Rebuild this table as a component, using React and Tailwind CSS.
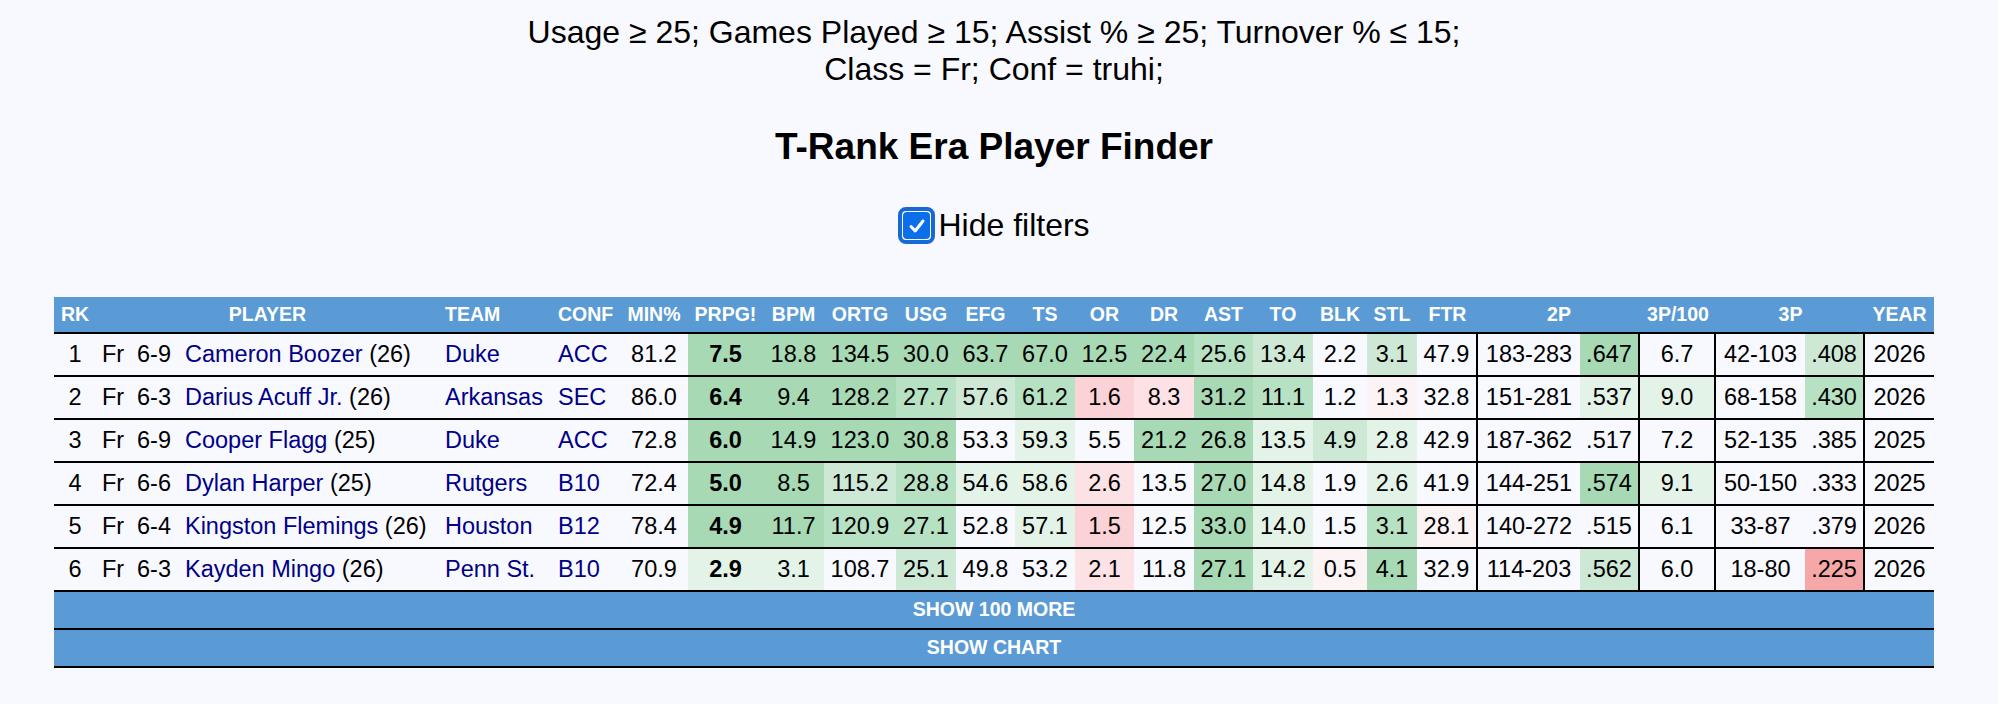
import React from "react";

// cell shades
const G4 = "bg-[#a7d9b4]";
const G3 = "bg-[#b7e1c3]";
const G2 = "bg-[#cde9d6]";
const G1 = "bg-[#e3f3e8]";
const R0 = "bg-[#fcf3f5]";
const R1 = "bg-[#fde2e5]";
const R2 = "bg-[#fbd2d6]";
const R3 = "bg-[#f6a7a7]";
const N = "";

const players = [
  {
    rk: 1, cls: "Fr", ht: "6-9", name: "Cameron Boozer", n: 26, team: "Duke", conf: "ACC", min: "81.2",
    stats: [["7.5", G4], ["18.8", G4], ["134.5", G4], ["30.0", G4], ["63.7", G4], ["67.0", G4], ["12.5", G4], ["22.4", G4], ["25.6", G3], ["13.4", G2], ["2.2", N], ["3.1", G2], ["47.9", N], ["183-283", N], [".647", G4], ["6.7", N], ["42-103", N], [".408", G2], ["2026", N]],
  },
  {
    rk: 2, cls: "Fr", ht: "6-3", name: "Darius Acuff Jr.", n: 26, team: "Arkansas", conf: "SEC", min: "86.0",
    stats: [["6.4", G4], ["9.4", G4], ["128.2", G4], ["27.7", G3], ["57.6", G2], ["61.2", G3], ["1.6", R2], ["8.3", R1], ["31.2", G4], ["11.1", G3], ["1.2", N], ["1.3", R0], ["32.8", N], ["151-281", N], [".537", G1], ["9.0", G1], ["68-158", N], [".430", G3], ["2026", N]],
  },
  {
    rk: 3, cls: "Fr", ht: "6-9", name: "Cooper Flagg", n: 25, team: "Duke", conf: "ACC", min: "72.8",
    stats: [["6.0", G4], ["14.9", G4], ["123.0", G4], ["30.8", G4], ["53.3", N], ["59.3", G1], ["5.5", N], ["21.2", G4], ["26.8", G4], ["13.5", G1], ["4.9", G2], ["2.8", G1], ["42.9", N], ["187-362", N], [".517", N], ["7.2", N], ["52-135", N], [".385", N], ["2025", N]],
  },
  {
    rk: 4, cls: "Fr", ht: "6-6", name: "Dylan Harper", n: 25, team: "Rutgers", conf: "B10", min: "72.4",
    stats: [["5.0", G4], ["8.5", G4], ["115.2", G2], ["28.8", G3], ["54.6", G1], ["58.6", G1], ["2.6", R1], ["13.5", N], ["27.0", G4], ["14.8", G1], ["1.9", N], ["2.6", G1], ["41.9", N], ["144-251", N], [".574", G4], ["9.1", G1], ["50-150", N], [".333", N], ["2025", N]],
  },
  {
    rk: 5, cls: "Fr", ht: "6-4", name: "Kingston Flemings", n: 26, team: "Houston", conf: "B12", min: "78.4",
    stats: [["4.9", G4], ["11.7", G4], ["120.9", G3], ["27.1", G3], ["52.8", N], ["57.1", G1], ["1.5", R2], ["12.5", N], ["33.0", G4], ["14.0", G1], ["1.5", N], ["3.1", G3], ["28.1", R0], ["140-272", N], [".515", N], ["6.1", N], ["33-87", N], [".379", N], ["2026", N]],
  },
  {
    rk: 6, cls: "Fr", ht: "6-3", name: "Kayden Mingo", n: 26, team: "Penn St.", conf: "B10", min: "70.9",
    stats: [["2.9", G1], ["3.1", G1], ["108.7", N], ["25.1", G2], ["49.8", N], ["53.2", N], ["2.1", R1], ["11.8", N], ["27.1", G4], ["14.2", G1], ["0.5", R0], ["4.1", G4], ["32.9", N], ["114-203", N], [".562", G2], ["6.0", N], ["18-80", N], [".225", R3], ["2026", N]],
  },
];

// stat index -> draws the black divider on its right
const dividers = [12, 14, 15, 17];

const Checkbox = () => (
  <span className="flex h-[37px] w-[37px] items-center justify-center rounded-[8px] border-[4px] border-[#1769d6] bg-white p-[1px]">
    <span className="flex h-full w-full items-center justify-center rounded-[4px] bg-[#0a6fe8]">
      <svg width="20" height="20" viewBox="0 0 20 20">
        <path d="M4 10.5 L8.2 15 L16 5" fill="none" stroke="white" strokeWidth="3" strokeLinecap="round" strokeLinejoin="round" />
      </svg>
    </span>
  </span>
);

export default function App() {
  const td = "h-[43px] border-b-2 border-black text-center whitespace-nowrap";

  return (
    <div className="h-[704px] overflow-hidden bg-[#f8f9fe] pr-[10px] font-['Liberation_Sans',Arial,sans-serif] text-black">
      <div className="pt-[14px] text-center text-[32px] leading-[37px]">
        Usage ≥ 25; Games Played ≥ 15; Assist % ≥ 25; Turnover % ≤ 15;
        <br />
        Class = Fr; Conf = truhi;
      </div>

      <h1 className="mt-[37px] text-center text-[37px] font-bold leading-[43px]">T-Rank Era Player Finder</h1>

      <div className="mt-[39px] flex items-center justify-center">
        <Checkbox />
        <span className="ml-[3px] text-[32px] leading-[37px]">Hide filters</span>
      </div>

      <table className="mx-auto mt-[53px] w-[1880px] table-fixed border-separate border-spacing-0 text-[23.5px]">
        <colgroup>
          <col className="w-[42px]" />
          <col className="w-[34px]" />
          <col className="w-[48px]" />
          <col className="w-[261px]" />
          <col className="w-[113px]" />
          <col className="w-[68px]" />
          <col className="w-[68px]" />
          <col className="w-[75px]" />
          <col className="w-[61px]" />
          <col className="w-[72px]" />
          <col className="w-[60px]" />
          <col className="w-[59px]" />
          <col className="w-[60px]" />
          <col className="w-[59px]" />
          <col className="w-[60px]" />
          <col className="w-[59px]" />
          <col className="w-[60px]" />
          <col className="w-[54px]" />
          <col className="w-[50px]" />
          <col className="w-[61px]" />
          <col className="w-[102px]" />
          <col className="w-[60px]" />
          <col className="w-[76px]" />
          <col className="w-[89px]" />
          <col className="w-[60px]" />
          <col className="w-[69px]" />
        </colgroup>
        <thead>
          <tr className="bg-[#5b9bd5] text-[19.5px] font-bold text-white">
            <th className="h-[37px] border-b-2 border-black text-center">RK</th>
            <th colSpan={3} className="border-b-2 border-black text-center">PLAYER</th>
            <th className="border-b-2 border-black pl-[6px] text-left">TEAM</th>
            <th className="border-b-2 border-black pl-[6px] text-left">CONF</th>
            <th className="border-b-2 border-black text-center">MIN%</th>
            <th className="border-b-2 border-black text-center">PRPG!</th>
            <th className="border-b-2 border-black text-center">BPM</th>
            <th className="border-b-2 border-black text-center">ORTG</th>
            <th className="border-b-2 border-black text-center">USG</th>
            <th className="border-b-2 border-black text-center">EFG</th>
            <th className="border-b-2 border-black text-center">TS</th>
            <th className="border-b-2 border-black text-center">OR</th>
            <th className="border-b-2 border-black text-center">DR</th>
            <th className="border-b-2 border-black text-center">AST</th>
            <th className="border-b-2 border-black text-center">TO</th>
            <th className="border-b-2 border-black text-center">BLK</th>
            <th className="border-b-2 border-black text-center">STL</th>
            <th className="border-b-2 border-black text-center">FTR</th>
            <th colSpan={2} className="border-b-2 border-black text-center">2P</th>
            <th className="border-b-2 border-black text-center">3P/100</th>
            <th colSpan={2} className="border-b-2 border-black text-center">3P</th>
            <th className="border-b-2 border-black text-center">YEAR</th>
          </tr>
        </thead>
        <tbody>
          {players.map((p) => (
            <tr key={p.rk}>
              <td className={td}>{p.rk}</td>
              <td className={td}>{p.cls}</td>
              <td className={td}>{p.ht}</td>
              <td className={`${td} pl-[7px] text-left`}>
                <a href="#" className="text-[#000087]">{p.name}</a> ({p.n})
              </td>
              <td className={`${td} pl-[6px] text-left`}>
                <a href="#" className="text-[#000087]">{p.team}</a>
              </td>
              <td className={`${td} pl-[6px] text-left`}>
                <a href="#" className="text-[#000087]">{p.conf}</a>
              </td>
              <td className={td}>{p.min}</td>
              {p.stats.map(([v, bg], i) => (
                <td
                  key={i}
                  className={`${td} ${bg} ${i === 0 ? "font-bold" : ""} ${dividers.includes(i) ? "border-r-2" : ""}`}
                >
                  {v}
                </td>
              ))}
            </tr>
          ))}
        </tbody>
        <tfoot>
          <tr>
            <td colSpan={26} className="h-[38px] cursor-pointer border-b-2 border-black bg-[#5b9bd5] text-center text-[19.5px] font-bold text-white">
              SHOW 100 MORE
            </td>
          </tr>
          <tr>
            <td colSpan={26} className="h-[38px] cursor-pointer border-b-2 border-black bg-[#5b9bd5] text-center text-[19.5px] font-bold text-white">
              SHOW CHART
            </td>
          </tr>
        </tfoot>
      </table>
    </div>
  );
}
